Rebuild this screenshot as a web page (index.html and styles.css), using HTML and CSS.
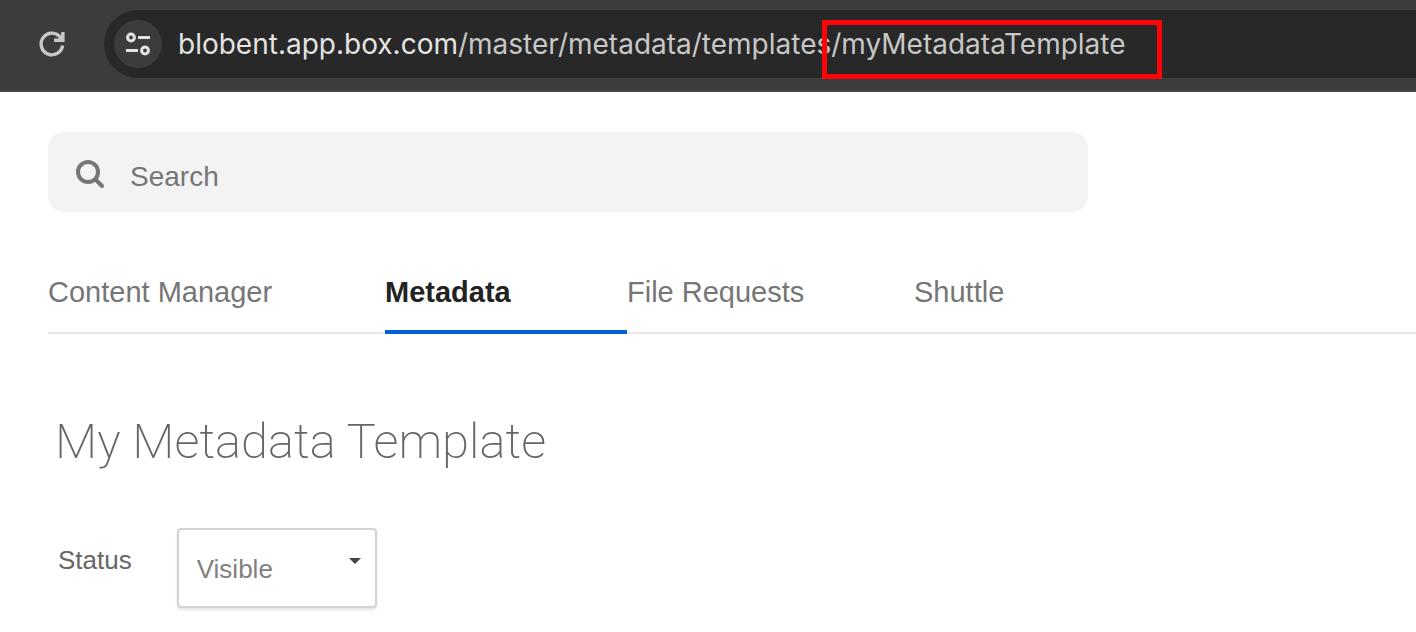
FILE: index.html
```html
<!DOCTYPE html>
<html lang="en">
<head>
<meta charset="utf-8">
<title>My Metadata Template</title>
<link rel="stylesheet" href="styles.css">
</head>
<body>
<header class="toolbar">
  <button class="reload" type="button" aria-label="Reload">
    <svg width="28" height="28" viewBox="0 0 28 28" fill="none" stroke="currentColor" stroke-width="3.4"><path d="M24.6 15.5A10.8 10.8 0 1 1 21.6 6.4L24.5 9.3"/><path d="M24.9 2V10.3H16"/><path d="M25 4V11H18Z" fill="currentColor" stroke="none"/></svg>
  </button>
  <div class="address">
    <button class="site-info" type="button" aria-label="View site information">
      <svg width="24" height="24" viewBox="0 0 24 24" fill="none" stroke="currentColor" stroke-width="3"><circle cx="5" cy="5.5" r="3.4"/><path d="M12 5.5H24M0 18.5H12"/><circle cx="19" cy="18.5" r="3.4"/></svg>
    </button>
    <div class="url"><span class="host">blobent.app.box.com</span>/master/metadata/templates<span class="key">/myMetadataTemplate</span></div>
  </div>
</header>
<main class="page">
  <label class="search">
    <svg width="30" height="30" viewBox="0 0 30 30" fill="none" stroke="currentColor" stroke-width="4"><circle cx="13" cy="13" r="10"/><path d="M20.5 20.5L27 27" stroke-linecap="round"/></svg>
    <input type="search" placeholder="Search" aria-label="Search">
  </label>
  <nav class="tabs">
    <a class="tab" href="#">Content Manager</a>
    <a class="tab active" href="#" aria-current="page">Metadata</a>
    <a class="tab" href="#">File Requests</a>
    <a class="tab" href="#">Shuttle</a>
  </nav>
  <h1 class="title">My Metadata Template</h1>
  <div class="field">
    <label class="field-label" for="status">Status</label>
    <div class="select-box">
      <select id="status"><option>Visible</option><option>Hidden</option></select>
      <svg class="caret" width="12" height="6" viewBox="0 0 12 6"><path d="M0 0H12L6 6Z" fill="#444"/></svg>
    </div>
  </div>
</main>
</body>
</html>
```
FILE: styles.css
```css
*, ::after { box-sizing: border-box; }
body { margin: 0; background: #fff; font-family: "Liberation Sans", Arial, sans-serif; overflow-x: hidden; }
button { border: 0; padding: 0; background: none; display: grid; place-items: center; flex: none; }
.toolbar { display: flex; align-items: center; gap: 38px; height: 92px; padding: 0 0 2px 38px; background: #3c3c3c; border-bottom: 2px solid #474747; }
.reload { color: #c7c7c7; }
.address { flex: 1; display: flex; align-items: center; gap: 16px; height: 68px; padding-left: 10px; border-radius: 34px 0 0 34px; background: #282828; }
.site-info { width: 48px; height: 48px; border-radius: 50%; background: #3c3c3c; color: #e3e3e3; }
.url { font: 400 28px/34px Inter, sans-serif; color: #c7c7c7; white-space: nowrap; }
.host { color: #e3e3e3; }
.key { position: relative; }
.key::after { content: ""; position: absolute; left: -9px; right: -36px; top: -7px; height: 59px; border: 5px solid #ff0509; }
.page { padding: 40px 0 24px 48px; }
.search { display: flex; align-items: center; gap: 25px; width: 1040px; max-width: 100%; height: 80px; padding: 4px 27px 0; border-radius: 16px; background: #f3f3f3; color: #767676; }
.search input { flex: 1; border: 0; padding: 5px 0 0; background: none; font: 28px/32px "Liberation Sans", Arial, sans-serif; color: #222; outline: 0; }
.search input::placeholder { color: #767676; opacity: 1; }
.tabs { display: grid; grid-template-columns: 337px 242px 287px 1fr; height: 82px; margin-top: 40px; border-bottom: 2px solid #e8e8e8; }
.tab { height: 82px; padding-top: 23px; font-size: 29px; line-height: 34px; color: #767676; text-decoration: none; }
.active { color: #222; font-weight: 700; border-bottom: 4px solid #0061d5; }
.title { margin: 76px 0 0 7px; font: 200 49px/64px Roboto, sans-serif; color: #666; }
.field { display: flex; gap: 45px; margin: 54px 0 0 10px; }
.field-label { padding-top: 17px; font-size: 26px; line-height: 30px; color: #666; }
.select-box { position: relative; width: 200px; }
.select-box select { width: 100%; height: 80px; padding: 2px 18px 0; border: 2px solid #d3d3d3; border-radius: 4px; background: #fff; box-shadow: 0 2px 3px #0000001a; appearance: none; font: 26px/30px "Liberation Sans", Arial, sans-serif; color: #808080; }
.caret { position: absolute; right: 16px; top: 30px; }
```
